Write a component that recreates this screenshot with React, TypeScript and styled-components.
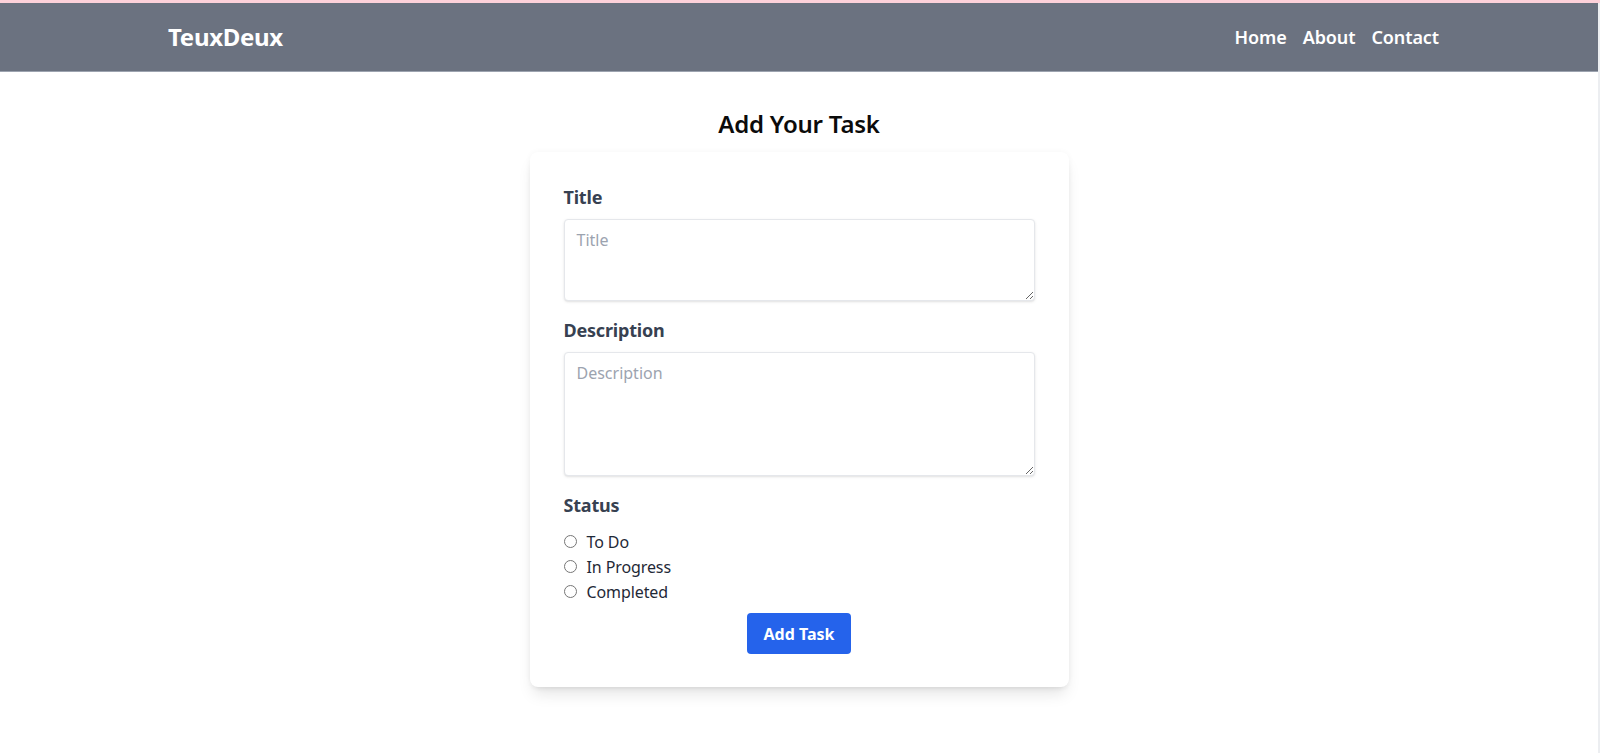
import React from "react";
import styled, { createGlobalStyle } from "styled-components";

const GlobalStyle = createGlobalStyle`
  * { box-sizing: border-box; }
  html, body { margin: 0; padding: 0; background: #ffffff; }
  body {
    font-family: "Segoe UI", "Noto Sans", "Open Sans", sans-serif;
    color: #111827;
  }
`;

const TopStrip = styled.div`
  height: 3px;
  background: #fdd1da;
`;

const Page = styled.div`
  min-height: 750px;
  border-right: 2px solid #eceef1;
`;

const NavBar = styled.nav`
  background: #6b7280;
  height: 69px;
  display: flex;
  align-items: center;
  border-bottom: 1px solid #9ca3af;
`;

const NavInner = styled.div`
  width: 1280px;
  margin: 0 auto;
  padding-left: 9px;
  display: flex;
  align-items: center;
  justify-content: space-between;
`;

const Brand = styled.a`
  color: #ffffff;
  font-size: 24px;
  font-weight: 700;
  line-height: 32px;
  text-decoration: none;
  letter-spacing: -0.3px;
`;

const NavLinks = styled.div`
  display: flex;
  gap: 16px;
`;

const NavLink = styled.a`
  color: #ffffff;
  font-size: 18px;
  font-weight: 600;
  line-height: 28px;
  text-decoration: none;
  letter-spacing: -0.1px;
`;

const Main = styled.main`
  display: flex;
  flex-direction: column;
  align-items: center;
  padding-top: 36px;
`;

const Heading = styled.h1`
  margin: 0 0 12px;
  font-size: 24px;
  line-height: 32px;
  font-weight: 600;
  color: #0b0b0b;
  letter-spacing: -0.2px;
`;

const Card = styled.form`
  width: 539px;
  background: #ffffff;
  border-radius: 8px;
  padding: 31px 34px 33px;
  box-shadow: 0 10px 15px -3px rgba(0, 0, 0, 0.1),
    0 4px 6px -4px rgba(0, 0, 0, 0.1), 0 0 6px rgba(0, 0, 0, 0.04);
  display: flex;
  flex-direction: column;
`;

const Field = styled.div`
  display: flex;
  flex-direction: column;
  margin-bottom: 15px;
`;

const Label = styled.label`
  font-size: 18px;
  line-height: 28px;
  font-weight: 700;
  color: #374151;
  margin-bottom: 8px;
  letter-spacing: -0.2px;
`;

const TextArea = styled.textarea<{ $height: number }>`
  width: 100%;
  height: ${(p) => p.$height}px;
  border: 1px solid #e5e7eb;
  border-radius: 4px;
  padding: 10px 12px 8px;
  font-family: inherit;
  font-size: 16px;
  line-height: 21px;
  color: #374151;
  box-shadow: 0 1px 3px 0 rgba(0, 0, 0, 0.1), 0 1px 2px -1px rgba(0, 0, 0, 0.1);
  outline: none;
  resize: vertical;
  &::placeholder {
    color: #9ca3af;
  }
`;

const RadioGroup = styled.div`
  display: flex;
  flex-direction: column;
  margin-top: 2px;
`;

const RadioRow = styled.label`
  display: flex;
  align-items: center;
  height: 25px;
  font-size: 16px;
  color: #1f2937;
  letter-spacing: -0.1px;
`;

const Radio = styled.input`
  width: 13px;
  height: 13px;
  margin: 0 10px 0 0;
  accent-color: #6b7280;
`;

const ButtonRow = styled.div`
  display: flex;
  justify-content: center;
  margin-top: 9px;
`;

const SubmitButton = styled.button`
  background: #2563eb;
  color: #ffffff;
  border: none;
  border-radius: 4px;
  height: 41px;
  padding: 0 17px;
  font-family: inherit;
  font-size: 16px;
  font-weight: 700;
  cursor: pointer;
`;

const statuses = ["To Do", "In Progress", "Completed"];

export default function App() {
  return (
    <>
      <GlobalStyle />
      <TopStrip />
      <Page>
        <NavBar>
          <NavInner>
            <Brand href="#">TeuxDeux</Brand>
            <NavLinks>
              <NavLink href="#">Home</NavLink>
              <NavLink href="#">About</NavLink>
              <NavLink href="#">Contact</NavLink>
            </NavLinks>
          </NavInner>
        </NavBar>
        <Main>
          <Heading>Add Your Task</Heading>
          <Card onSubmit={(e) => e.preventDefault()}>
            <Field>
              <Label htmlFor="title">Title</Label>
              <TextArea id="title" placeholder="Title" $height={82} />
            </Field>
            <Field>
              <Label htmlFor="description">Description</Label>
              <TextArea id="description" placeholder="Description" $height={124} />
            </Field>
            <Label as="div">Status</Label>
            <RadioGroup>
              {statuses.map((s) => (
                <RadioRow key={s}>
                  <Radio type="radio" name="status" value={s} />
                  {s}
                </RadioRow>
              ))}
            </RadioGroup>
            <ButtonRow>
              <SubmitButton type="submit">Add Task</SubmitButton>
            </ButtonRow>
          </Card>
        </Main>
      </Page>
    </>
  );
}
